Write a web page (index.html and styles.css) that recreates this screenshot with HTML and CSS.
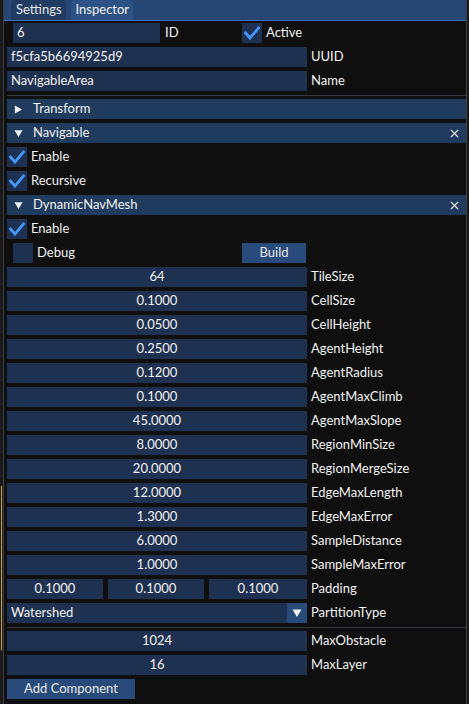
FILE: index.html
```html
<!DOCTYPE html>
<html>
<head>
<meta charset="utf-8">
<link rel="stylesheet" href="styles.css">
</head>
<body>
<div class="screen">
  <div class="side"><div class="side-top"></div><div class="side-yellow"></div><div class="side-bottom"></div></div>
  <div class="window">
    <div class="tabbar">
      <div class="tab">Settings</div>
      <div class="tab active">Inspector</div>
    </div>
    <div class="content">
      <div class="row id-row">
        <div class="field id-field">6</div>
        <div class="label id-label">ID</div>
        <div class="check"><svg viewBox="0 0 20 20"><polyline points="3.5,10 8,15 16.5,5"/></svg></div>
        <div class="label">Active</div>
      </div>
      <div class="row"><div class="field">f5cfa5b6694925d9</div><div class="label">UUID</div></div>
      <div class="row"><div class="field">NavigableArea</div><div class="label">Name</div></div>
      <div class="sep"></div>

      <div class="header">
        <svg class="tri" viewBox="0 0 10 10"><polygon points="1,0.5 9,5 1,9.5"/></svg>
        <span class="htext">Transform</span>
      </div>
      <div class="header">
        <svg class="tri" viewBox="0 0 10 10"><polygon points="0.5,1.5 9.5,1.5 5,9"/></svg>
        <span class="htext">Navigable</span>
        <svg class="close" viewBox="0 0 10 10"><line x1="1" y1="1" x2="9" y2="9"/><line x1="9" y1="1" x2="1" y2="9"/></svg>
      </div>
      <div class="row">
        <div class="check"><svg viewBox="0 0 20 20"><polyline points="3.5,10 8,15 16.5,5"/></svg></div>
        <div class="label">Enable</div>
      </div>
      <div class="row">
        <div class="check"><svg viewBox="0 0 20 20"><polyline points="3.5,10 8,15 16.5,5"/></svg></div>
        <div class="label">Recursive</div>
      </div>
      <div class="header">
        <svg class="tri" viewBox="0 0 10 10"><polygon points="0.5,1.5 9.5,1.5 5,9"/></svg>
        <span class="htext">DynamicNavMesh</span>
        <svg class="close" viewBox="0 0 10 10"><line x1="1" y1="1" x2="9" y2="9"/><line x1="9" y1="1" x2="1" y2="9"/></svg>
      </div>
      <div class="row">
        <div class="check"><svg viewBox="0 0 20 20"><polyline points="3.5,10 8,15 16.5,5"/></svg></div>
        <div class="label">Enable</div>
      </div>
      <div class="row debug-row">
        <div class="debug-group">
          <div class="check"></div>
          <div class="label">Debug</div>
        </div>
        <div class="button">Build</div>
      </div>

      <div class="row"><div class="field num">64</div><div class="label">TileSize</div></div>
      <div class="row"><div class="field num">0.1000</div><div class="label">CellSize</div></div>
      <div class="row"><div class="field num">0.0500</div><div class="label">CellHeight</div></div>
      <div class="row"><div class="field num">0.2500</div><div class="label">AgentHeight</div></div>
      <div class="row"><div class="field num">0.1200</div><div class="label">AgentRadius</div></div>
      <div class="row"><div class="field num">0.1000</div><div class="label">AgentMaxClimb</div></div>
      <div class="row"><div class="field num">45.0000</div><div class="label">AgentMaxSlope</div></div>
      <div class="row"><div class="field num">8.0000</div><div class="label">RegionMinSize</div></div>
      <div class="row"><div class="field num">20.0000</div><div class="label">RegionMergeSize</div></div>
      <div class="row"><div class="field num">12.0000</div><div class="label">EdgeMaxLength</div></div>
      <div class="row"><div class="field num">1.3000</div><div class="label">EdgeMaxError</div></div>
      <div class="row"><div class="field num">6.0000</div><div class="label">SampleDistance</div></div>
      <div class="row"><div class="field num">1.0000</div><div class="label">SampleMaxError</div></div>
      <div class="row">
        <div class="triple">
          <div class="field num">0.1000</div>
          <div class="field num">0.1000</div>
          <div class="field num">0.1000</div>
        </div>
        <div class="label">Padding</div>
      </div>
      <div class="row">
        <div class="field combo">
          <span class="combo-text">Watershed</span>
          <span class="combo-btn"><svg viewBox="0 0 10 10"><polygon points="0.5,1.5 9.5,1.5 5,9"/></svg></span>
        </div>
        <div class="label">PartitionType</div>
      </div>
      <div class="sep"></div>
      <div class="row"><div class="field num">1024</div><div class="label">MaxObstacle</div></div>
      <div class="row"><div class="field num">16</div><div class="label">MaxLayer</div></div>
      <div class="button add">Add Component</div>
    </div>
  </div>
  <div class="side-right"></div>
</div>
</body>
</html>
```

FILE: styles.css
```css
html, body {
  margin: 0;
  padding: 0;
  background: #151515;
}
body {
  font-family: "Lato", "Noto Sans", sans-serif;
  font-size: 13px;
  color: #f2f2f2;
  width: 469px;
  height: 704px;
  overflow: hidden;
}
.screen {
  display: flex;
  width: 469px;
  height: 704px;
}
.side {
  width: 3px;
  display: flex;
  flex-direction: column;
  background: #1a1a1a;
}
.side-top { height: 486px; }
.side-yellow {
  height: 164px;
  border-left: 1px solid #c9a23a;
  margin-left: 1px;
  background: #231f17;
}
.side-bottom {
  flex: 1;
  border-top: 1px solid #3a3a3a;
}
.side-right {
  width: 2px;
  background: #1a1a1a;
}
.window {
  width: 462px;
  height: 704px;
  border-left: 1px solid #3d3d44;
  border-right: 1px solid #3d3d44;
  background: #0f0f0f;
  display: flex;
  flex-direction: column;
}
.tabbar {
  height: 20px;
  background: #264673;
  border-bottom: 1px solid #3d6fb3;
  display: flex;
  align-items: flex-end;
  padding-left: 7px;
  gap: 5px;
}
.tab {
  height: 20px;
  line-height: 19px;
  padding: 0 4px 0 5px;
  background: #203c62;
  border-radius: 4px 4px 0 0;
  color: #e6e6e6;
}
.tab.active {
  background: #2c5184;
  color: #f2f2f2;
}
.content {
  padding: 2px 0 0 3px;
  display: flex;
  flex-direction: column;
}
.row {
  display: flex;
  align-items: center;
  height: 20px;
  margin-bottom: 4px;
}
.field {
  width: 300px;
  height: 20px;
  box-sizing: border-box;
  background: #1f3150;
  display: flex;
  align-items: center;
  padding-left: 4px;
  padding-bottom: 2px;
  white-space: nowrap;
}
.field.num {
  justify-content: center;
  padding-left: 0;
}
.label {
  margin-left: 4px;
  padding-bottom: 2px;
  white-space: nowrap;
}
.id-row {
  padding-left: 6px;
}
.id-field {
  width: 147px;
}
.id-label {
  margin-left: 5px;
  width: 77px;
}
.check {
  width: 20px;
  height: 20px;
  background: #1f3150;
  flex: none;
}
.check svg {
  width: 20px;
  height: 20px;
  display: block;
}
.check polyline {
  fill: none;
  stroke: #4296fa;
  stroke-width: 2.8;
  stroke-linecap: square;
}
.sep {
  height: 1px;
  background: #3a3a42;
  margin: 0 0 3px 0;
}
.header {
  height: 20px;
  margin-bottom: 4px;
  background: #1f3b5d;
  display: flex;
  align-items: center;
  padding-left: 6px;
  padding-right: 7px;
}
.tri {
  width: 9px;
  height: 9px;
  fill: #f2f2f2;
  flex: none;
  margin-left: 1px;
}
.htext {
  margin-left: 10px;
  padding-bottom: 2px;
}
.close {
  margin-left: auto;
  width: 9px;
  height: 9px;
  stroke: #f2f2f2;
  stroke-width: 1.4;
}
.debug-row {
  display: grid;
  grid-template-columns: 235px 64px;
}
.debug-group {
  display: flex;
  align-items: center;
  padding-left: 6px;
}
.button {
  height: 20px;
  box-sizing: border-box;
  padding-bottom: 2px;
  background: #284b7b;
  display: flex;
  align-items: center;
  justify-content: center;
  color: #e8e8e8;
}
.button.add {
  width: 128px;
}
.triple {
  display: grid;
  grid-template-columns: 96px 96px 98px;
  gap: 5px;
  width: 300px;
}
.triple .field {
  width: auto;
}
.combo {
  padding-right: 0;
  padding-bottom: 0;
  justify-content: space-between;
}
.combo-text {
  padding-bottom: 2px;
}
.combo-btn {
  width: 20px;
  height: 20px;
  background: #284b7b;
  display: flex;
  align-items: center;
  justify-content: center;
}
.combo-btn svg {
  width: 10px;
  height: 10px;
  fill: #f2f2f2;
}
```
